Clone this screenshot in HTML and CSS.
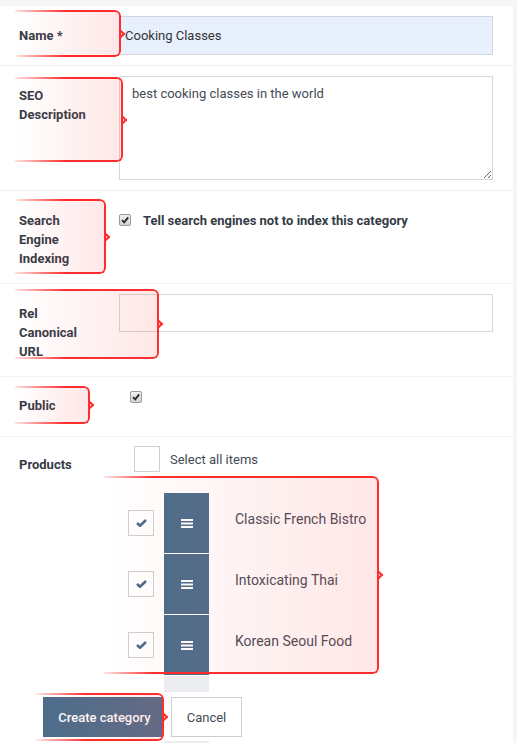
FILE: index.html
```html
<!DOCTYPE html>
<html>
<head>
<meta charset="utf-8">
<link rel="stylesheet" href="styles.css">
</head>
<body>
<div class="panel">
  <div class="row">
    <div class="label">Name *</div>
    <div class="field">
      <div class="input input-filled">Cooking Classes</div>
    </div>
  </div>
  <div class="row">
    <div class="label">SEO Description</div>
    <div class="field">
      <textarea class="textarea">best cooking classes in the world</textarea>
    </div>
  </div>
  <div class="row">
    <div class="label">Search Engine Indexing</div>
    <div class="field field-check">
      <span class="cb"><svg viewBox="0 0 10 10" width="10" height="10"><path d="M2 5.2 L4.2 7.4 L8.2 2.4" fill="none" stroke="#2b2b2b" stroke-width="1.9"/></svg></span>
      <span class="check-text">Tell search engines not to index this category</span>
    </div>
  </div>
  <div class="row">
    <div class="label">Rel Canonical URL</div>
    <div class="field">
      <div class="input"></div>
    </div>
  </div>
  <div class="row row-public">
    <div class="label">Public</div>
    <div class="field">
      <span class="cb cb-public"><svg viewBox="0 0 10 10" width="10" height="10"><path d="M2 5.2 L4.2 7.4 L8.2 2.4" fill="none" stroke="#2b2b2b" stroke-width="1.9"/></svg></span>
    </div>
  </div>
  <div class="row row-products">
    <div class="label label-products">Products</div>
    <div class="field">
      <div class="select-all">
        <span class="box"></span>
        <span class="select-text">Select all items</span>
      </div>
      <div class="items">
        <div class="item">
          <span class="box"><svg viewBox="0 0 11 8" width="11" height="8"><path d="M1 4 L4 6.8 L10 1" fill="none" stroke="#4b6d8b" stroke-width="2.6"/></svg></span>
          <span class="handle"><svg viewBox="0 0 12 9" width="12" height="9"><rect x="0" y="0" width="12" height="2" fill="#fff"/><rect x="0" y="3.5" width="12" height="2" fill="#fff"/><rect x="0" y="7" width="12" height="2" fill="#fff"/></svg></span>
          <span class="item-text">Classic French Bistro</span>
        </div>
        <div class="item">
          <span class="box"><svg viewBox="0 0 11 8" width="11" height="8"><path d="M1 4 L4 6.8 L10 1" fill="none" stroke="#4b6d8b" stroke-width="2.6"/></svg></span>
          <span class="handle"><svg viewBox="0 0 12 9" width="12" height="9"><rect x="0" y="0" width="12" height="2" fill="#fff"/><rect x="0" y="3.5" width="12" height="2" fill="#fff"/><rect x="0" y="7" width="12" height="2" fill="#fff"/></svg></span>
          <span class="item-text">Intoxicating Thai</span>
        </div>
        <div class="item">
          <span class="box"><svg viewBox="0 0 11 8" width="11" height="8"><path d="M1 4 L4 6.8 L10 1" fill="none" stroke="#4b6d8b" stroke-width="2.6"/></svg></span>
          <span class="handle"><svg viewBox="0 0 12 9" width="12" height="9"><rect x="0" y="0" width="12" height="2" fill="#fff"/><rect x="0" y="3.5" width="12" height="2" fill="#fff"/><rect x="0" y="7" width="12" height="2" fill="#fff"/></svg></span>
          <span class="item-text">Korean Seoul Food</span>
        </div>
        <div class="placeholder"></div>
      </div>
    </div>
  </div>
  <div class="actions">
    <button class="btn btn-primary">Create category</button>
    <button class="btn btn-default">Cancel</button>
  </div>
  <div class="ghost"></div>
</div>

<div class="note note-name"></div>
<div class="note note-seo"></div>
<div class="note note-search"></div>
<div class="note note-rel"></div>
<div class="note note-public"></div>
<div class="note note-products"></div>
<div class="note note-create"></div>
</body>
</html>
```

FILE: styles.css
```css
html, body {
  margin: 0;
  padding: 0;
}
body {
  background: #f6f6f6;
  font-family: Roboto, "Liberation Sans", sans-serif;
  font-size: 13px;
  color: #444a55;
  overflow: hidden;
}
.panel {
  width: 513px;
  margin-top: 6px;
  min-height: 737px;
  background: #fff;
}
.row {
  display: grid;
  grid-template-columns: 100px 374px;
  padding: 10px 0 10px 19px;
  border-bottom: 1px solid #f1f1f1;
}
.label {
  width: 75px;
  font-weight: bold;
  font-size: 13px;
  line-height: 19px;
  color: #353b46;
  padding: 10px 0 5px;
}
.input {
  box-sizing: border-box;
  height: 39px;
  border: 1px solid #d6d6d6;
  background: #fff;
  padding: 0 5px;
  line-height: 38px;
  font-size: 13px;
  color: #333;
}
.input-filled {
  background: #e8f0fe;
  border-color: #d2d6dc;
}
.row + .row .input {
  height: 38px;
}
.textarea {
  display: block;
  box-sizing: border-box;
  width: 374px;
  height: 104px;
  margin: 0;
  border: 1px solid #d6d6d6;
  padding: 7px 12px;
  font-family: Roboto, "Liberation Sans", sans-serif;
  font-size: 13px;
  line-height: 20px;
  color: #444a55;
  background: #fff;
  resize: vertical;
  outline: none;
}
.field-check {
  display: flex;
  align-items: center;
  align-self: start;
  height: 19px;
  margin-top: 10px;
}
.cb {
  box-sizing: border-box;
  width: 12px;
  height: 12px;
  border: 1px solid #9a9a9a;
  border-radius: 2px;
  background: linear-gradient(#f0f0f0, #d4d4d4);
  display: inline-flex;
  align-items: center;
  justify-content: center;
  margin-top: -2px;
}
.cb svg {
  display: block;
}
.check-text {
  margin-left: 12px;
  font-weight: bold;
  color: #353b46;
  font-size: 13px;
}
.row-public {
  padding-bottom: 16px;
}
.row-public .label {
  padding-top: 9px;
}
.cb-public {
  margin: 4px 0 0 11px;
  display: flex;
}
.label-products {
  padding-top: 8px;
}
.row-products {
  border-bottom: none;
  padding-bottom: 5px;
}
.select-all {
  display: flex;
  align-items: center;
  margin-left: 15px;
  margin-top: -1px;
}
.box {
  box-sizing: border-box;
  width: 26px;
  height: 26px;
  border: 1px solid #cfcfcf;
  background: #fff;
  display: flex;
  align-items: center;
  justify-content: center;
  flex: none;
}
.box svg {
  display: block;
}
.select-text {
  margin-left: 10px;
  font-size: 13px;
  color: #444a55;
}
.items {
  margin-top: 21px;
}
.item {
  display: flex;
  align-items: center;
  height: 60px;
  margin-bottom: 1px;
}
.item .box {
  margin-left: 9px;
}
.handle {
  width: 45px;
  height: 60px;
  margin-left: 10px;
  background: #4b6d8b;
  display: flex;
  align-items: center;
  justify-content: center;
  flex: none;
}
.handle svg {
  display: block;
}
.item-text {
  margin-left: 26px;
  margin-bottom: 8px;
  font-size: 14px;
  color: #444a55;
}
.placeholder {
  width: 45px;
  height: 16px;
  margin-left: 45px;
  background: #ebedf0;
}
.actions {
  display: flex;
  gap: 9px;
  padding-left: 43px;
}
.btn {
  height: 40px;
  font-family: Roboto, "Liberation Sans", sans-serif;
  font-size: 13px;
  padding: 0;
  margin: 0;
  cursor: pointer;
}
.btn-primary {
  width: 119px;
  background: #4b6d8b;
  border: 1px solid #4b6d8b;
  color: #fff;
  font-weight: 500;
  padding-left: 4px;
}
.btn-default {
  width: 71px;
  background: #fff;
  border: 1px solid #cfcfcf;
  color: #444a55;
}
.ghost {
  width: 45px;
  height: 10px;
  margin: 4px 0 0 164px;
  background: #ebedf0;
}

/* annotation callouts */
.note {
  position: absolute;
  box-sizing: border-box;
  border-radius: 0 6px 6px 0;
  background: linear-gradient(to right, rgba(255, 90, 90, 0) 0%, rgba(255, 90, 90, 0.15) 100%);
  pointer-events: none;
}
.note::before {
  content: "";
  position: absolute;
  inset: 0;
  border: 2px solid #ff2d2d;
  border-left: 0;
  border-radius: 0 6px 6px 0;
  -webkit-mask-image: linear-gradient(to right, rgba(0, 0, 0, 0.12) 0, #000 50px);
  mask-image: linear-gradient(to right, rgba(0, 0, 0, 0.12) 0, #000 50px);
}
.note::after {
  content: "";
  position: absolute;
  right: -3px;
  top: 50%;
  width: 4px;
  height: 4px;
  border-top: 2px solid #ff2d2d;
  border-right: 2px solid #ff2d2d;
  transform: translateY(-50%) rotate(45deg);
}
.note-name { left: 15px; top: 10px; width: 106px; height: 47px; }
.note-seo { left: 15px; top: 77px; width: 108px; height: 85px; }
.note-search { left: 15px; top: 199px; width: 91px; height: 75px; }
.note-rel { left: 15px; top: 289px; width: 144px; height: 70px; }
.note-public { left: 15px; top: 386px; width: 75px; height: 38px; }
.note-products { left: 104px; top: 476px; width: 275px; height: 198px; }
.note-create { left: 36px; top: 693px; width: 128px; height: 48px; }
```
